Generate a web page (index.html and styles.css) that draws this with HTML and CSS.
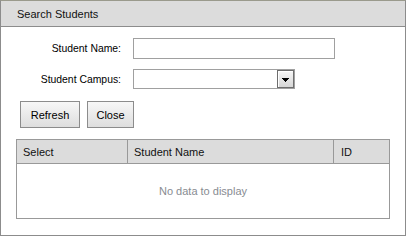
FILE: index.html
```html
<!DOCTYPE html>
<html>
<head>
<meta charset="utf-8">
<link rel="stylesheet" href="styles.css">
</head>
<body>
<div class="panel">
  <div class="panel-header">Search Students</div>
  <div class="form">
    <label class="label" for="sname">Student Name:</label>
    <input class="text-input" id="sname" type="text">
    <span class="label">Student Campus:</span>
    <div class="select">
      <div class="select-value"></div>
      <div class="select-btn">
        <svg width="7" height="4" viewBox="0 0 7 4" shape-rendering="crispEdges">
          <rect x="0" y="0" width="7" height="1" fill="#000"/>
          <rect x="1" y="1" width="5" height="1" fill="#000"/>
          <rect x="2" y="2" width="3" height="1" fill="#000"/>
          <rect x="3" y="3" width="1" height="1" fill="#000"/>
        </svg>
      </div>
    </div>
  </div>
  <div class="actions">
    <button class="btn btn-refresh">Refresh</button>
    <button class="btn btn-close">Close</button>
  </div>
  <div class="grid">
    <div class="grid-head">
      <div class="col col-select">Select</div>
      <div class="col col-name">Student Name</div>
      <div class="col col-id">ID</div>
    </div>
    <div class="grid-body">No data to display</div>
  </div>
</div>
</body>
</html>
```

FILE: styles.css
```css
html, body {
  margin: 0;
  padding: 0;
  background: #fff;
}
body {
  font-family: "Liberation Sans", Arial, sans-serif;
  font-size: 11px;
  color: #000;
}
.panel {
  width: 406px;
  height: 236px;
  box-sizing: border-box;
  border: 1px solid #8c8c8c;
  border-top-color: #9a9a8c;
  background: #fff;
  display: flex;
  flex-direction: column;
}
.panel-header {
  height: 25px;
  border-bottom: 1px solid #8c8c8c;
  background: #dcdcdc;
  padding-left: 16px;
  display: flex;
  align-items: center;
  color: #111;
}
.form {
  margin-top: 11px;
  display: grid;
  grid-template-columns: 120px 202px;
  grid-template-rows: 21px 20px;
  column-gap: 12px;
  row-gap: 10px;
}
.label {
  text-align: right;
  align-self: center;
  font-size: 10.4px;
  color: #000;
}
.text-input {
  box-sizing: border-box;
  width: 202px;
  height: 21px;
  margin: 0;
  padding: 0 3px;
  border: 1px solid #a0a0a0;
  outline: none;
  font: inherit;
  background: #fff;
}
.select {
  box-sizing: border-box;
  width: 162px;
  height: 20px;
  border: 1px solid #a0a0a0;
  display: flex;
  background: #fff;
}
.select-value {
  flex: 1;
}
.select-btn {
  box-sizing: border-box;
  width: 17px;
  height: 18px;
  border: 1px solid #6e6e6e;
  box-shadow: inset 1px 1px 0 #fff;
  background: linear-gradient(#f6f6f6, #d6d6d6);
  display: flex;
  align-items: center;
  justify-content: center;
}
.select-btn svg {
  display: block;
  margin-top: 2px;
}
.actions {
  margin-top: 12px;
  padding-left: 19px;
  display: flex;
  gap: 7px;
}
.btn {
  box-sizing: border-box;
  height: 27px;
  margin: 0;
  padding: 0;
  border: 1px solid #8c8c8c;
  background: linear-gradient(#f7f7f7, #dedede);
  font: inherit;
  color: #000;
  text-align: center;
}
.btn-refresh {
  width: 60px;
}
.btn-close {
  width: 47px;
}
.grid {
  margin-top: 11px;
  margin-left: 15px;
  width: 374px;
  box-sizing: border-box;
  border: 1px solid #999;
  display: flex;
  flex-direction: column;
}
.grid-head {
  height: 23px;
  background: #dcdcdc;
  border-bottom: 1px solid #999;
  display: flex;
}
.col {
  box-sizing: border-box;
  padding-left: 6px;
  display: flex;
  align-items: center;
  color: #111;
}
.col-select {
  width: 111px;
  border-right: 1px solid #999;
}
.col-name {
  width: 206px;
  border-right: 1px solid #999;
}
.col-id {
  flex: 1;
  padding-left: 7px;
}
.grid-body {
  height: 54px;
  display: flex;
  align-items: center;
  justify-content: center;
  color: #888c92;
}
```
